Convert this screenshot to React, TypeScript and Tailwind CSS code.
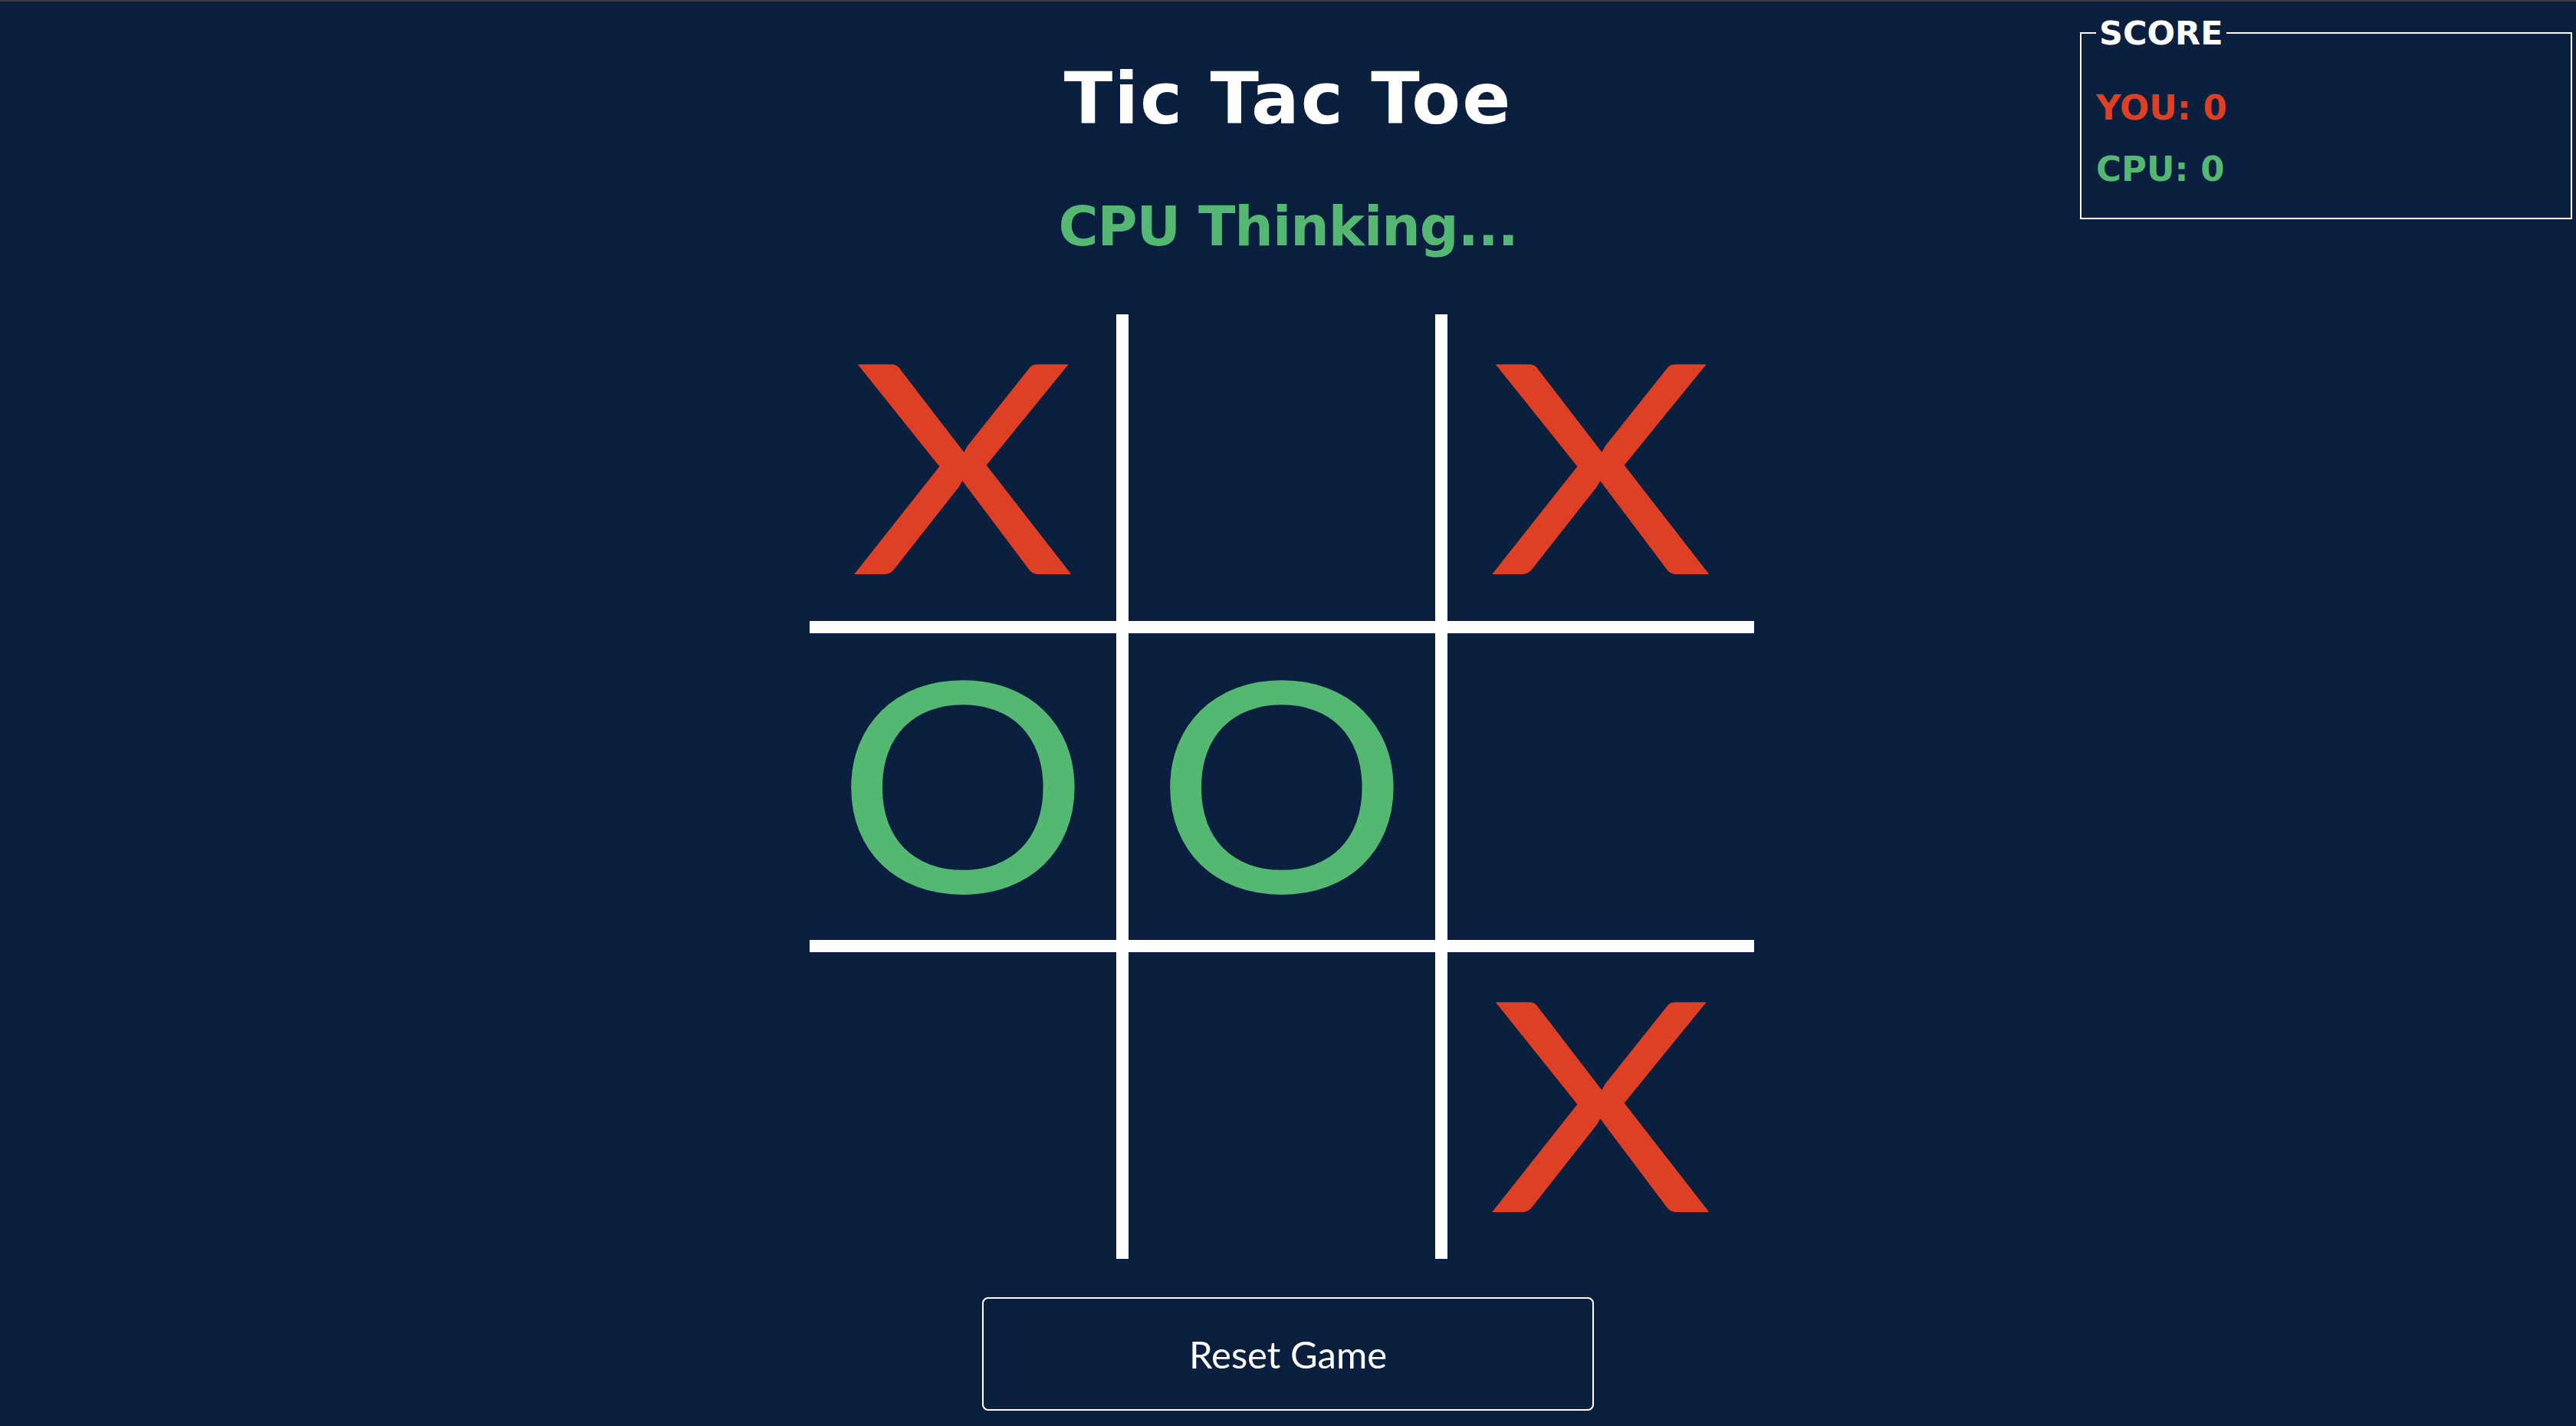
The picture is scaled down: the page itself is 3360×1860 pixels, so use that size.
const cells: string[] = ['X', '', 'X', 'O', 'O', '', '', '', 'X'];

function Mark({ v }: { v: string }) {
  if (v === 'X') {
    return (
      <span className="block font-['Lato',sans-serif] font-normal text-[382px] leading-none text-[#de4026] select-none scale-x-[1.18] -translate-y-[9px]">
        X
      </span>
    );
  }
  if (v === 'O') {
    return (
      <span className="block font-['Lato',sans-serif] font-normal text-[382px] leading-none text-[#55b872] select-none scale-x-[1.08] -translate-y-[10px]">
        O
      </span>
    );
  }
  return null;
}

export default function App() {
  return (
    <div className="relative min-h-screen w-full bg-[#0b1f3e] border-t-2 border-[#3d3d3d] overflow-hidden">
      <fieldset className="absolute top-[15px] right-[5px] w-[642px] m-0 border-2 border-white px-[19px] pt-[45px] pb-[36px] font-['DejaVu_Sans',sans-serif] font-bold">
        <legend className="px-[4px] text-white text-[43px] leading-[52px]">SCORE</legend>
        <div className="flex flex-col gap-[26px]">
          <div className="text-[45px] leading-[54px] text-[#de4026]">YOU: 0</div>
          <div className="text-[45px] leading-[54px] text-[#55b872]">CPU: 0</div>
        </div>
      </fieldset>

      <div className="flex flex-col items-center pt-[71px]">
        <h1 className="font-['DejaVu_Sans',sans-serif] font-bold text-white text-[93px] leading-[112px] tracking-[2px]">
          Tic Tac Toe
        </h1>
        <div className="mt-[69px] font-['DejaVu_Sans',sans-serif] font-bold text-[#55b872] text-[71px] leading-[84px] tracking-[-1px]">
          CPU Thinking...
        </div>

        <div className="mt-[72px] mr-[16px] grid grid-cols-[400px_400px_400px] grid-rows-[400px_400px_400px] gap-[16px] bg-white">
          {cells.map((v, i) => (
            <div key={i} className="flex items-center justify-center bg-[#0b1f3e]">
              <Mark v={v} />
            </div>
          ))}
        </div>

        <button className="mt-[50px] w-[798px] h-[148px] rounded-[8px] border-2 border-white bg-transparent text-white font-['Lato',sans-serif] text-[49px] leading-none">
          Reset Game
        </button>
      </div>
    </div>
  );
}
